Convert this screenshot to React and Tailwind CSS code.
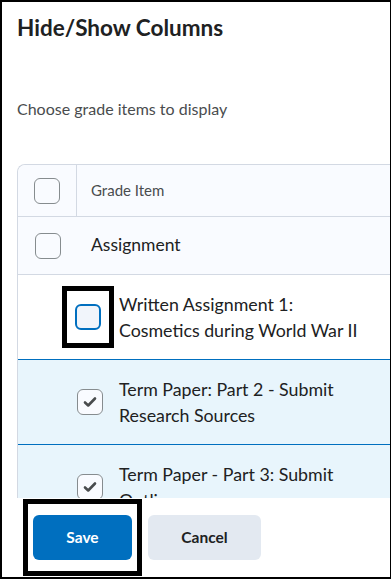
import React from 'react';

function Box({ checked, focus }) {
  if (focus) {
    return (
      <span className="w-[26px] h-[26px] shrink-0 rounded-[6px] border-2 border-[#006fbf] bg-[#f1f5fb]"></span>
    );
  }
  return (
    <span className="w-[26px] h-[26px] shrink-0 rounded-[6px] border border-[#868c8f] bg-[#f9fbff] flex items-center justify-center">
      {checked && (
        <svg width="16" height="16" viewBox="0 0 16 16">
          <path d="M3 8.5l3.2 3L13 4.5" fill="none" stroke="#494c4e" strokeWidth="2.6" strokeLinecap="round" strokeLinejoin="round" />
        </svg>
      )}
    </span>
  );
}

export default function App() {
  return (
    <div
      className="w-[391px] h-[579px] border-2 border-r border-black bg-white flex flex-col overflow-hidden text-[#202122]"
      style={{ fontFamily: 'Lato, "Noto Sans", sans-serif' }}
    >
      {/* Header */}
      <div className="pl-[15px] pt-[12px]">
        <h1 className="text-[22.5px] leading-[28px] font-bold text-[#202122]">Hide/Show Columns</h1>
        <p className="mt-[57px] text-[16px] leading-[20px] text-[#494c4e]">Choose grade items to display</p>
      </div>

      {/* Table */}
      <div className="flex-1 overflow-hidden pl-[15px] pt-[45px]">
        <div className="w-[400px] border-l border-t border-[#d3d9e3] rounded-tl-[8px]">
          {/* Header row */}
          <div className="h-[52px] flex bg-[#f9fbff] border-b border-[#d3d9e3] rounded-tl-[8px]">
            <div className="w-[59px] flex items-center justify-center border-r border-[#d3d9e3]">
              <Box />
            </div>
            <div className="flex items-center pl-[14px] text-[15px] text-[#494c4e]">Grade Item</div>
          </div>

          {/* Assignment */}
          <div className="h-[58px] flex items-center bg-[#f9fbff] border-b border-[#d3d9e3]">
            <div className="w-[59px] flex items-center justify-center">
              <Box />
            </div>
            <div className="pl-[14px] text-[17.5px]">Assignment</div>
          </div>

          {/* Written assignment */}
          <div className="h-[84px] flex items-center bg-white">
            <div className="w-[100px] flex justify-end pr-[4px]">
              <div className="border-[5px] border-black px-[8px] py-[13px] flex">
                <Box focus />
              </div>
            </div>
            <div className="pl-[1px] text-[17.8px] leading-[26px]">
              Written Assignment 1:
              <br />
              Cosmetics during World War II
            </div>
          </div>

          {/* Term paper 2 */}
          <div className="h-[85px] flex items-center bg-[#e8f5fc] border-t border-[#006fbf]">
            <div className="w-[101px] flex justify-end pr-[16px]">
              <Box checked />
            </div>
            <div className="text-[17.8px] leading-[26px]">
              Term Paper: Part 2 - Submit
              <br />
              Research Sources
            </div>
          </div>

          {/* Term paper 3 */}
          <div className="h-[85px] flex items-center bg-[#e8f5fc] border-t border-[#006fbf]">
            <div className="w-[101px] flex justify-end pr-[16px]">
              <Box checked />
            </div>
            <div className="text-[17.8px] leading-[26px]">
              Term Paper - Part 3: Submit
              <br />
              Outline
            </div>
          </div>
        </div>
      </div>

      {/* Footer */}
      <div className="h-[79px] shrink-0 bg-white flex items-start pl-[21px] pt-[1px] gap-[6px]">
        <div className="border-[5px] border-black px-[5px] py-[11px]">
          <button className="w-[99px] h-[45px] rounded-[6px] bg-[#006fbf] text-white text-[15.5px] font-bold">Save</button>
        </div>
        <button className="mt-[16px] w-[113px] h-[45px] rounded-[6px] bg-[#e3e9f1] text-[#202122] text-[15.5px] font-bold">Cancel</button>
      </div>
    </div>
  );
}
